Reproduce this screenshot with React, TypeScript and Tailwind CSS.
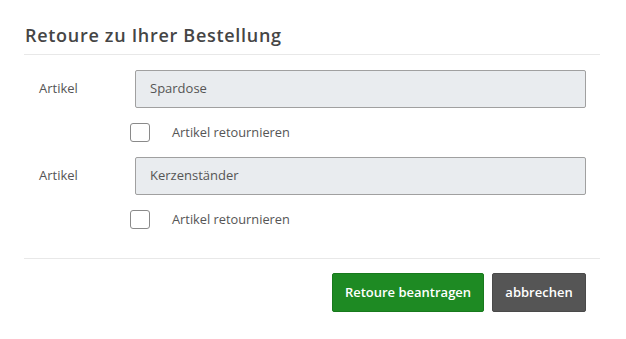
import React from "react";

function Row({ value }: { value: string }) {
  return (
    <div>
      <div className="flex items-center h-[38px]">
        <div className="w-[96px] text-[13px] text-[#555]">Artikel</div>
        <div className="flex-1 h-[38px] flex items-center bg-[#e9ecef] border border-[#a0a0a0] rounded-[2px] pl-[14px] text-[13px] text-[#555]">
          {value}
        </div>
      </div>
      <div className="flex items-center h-[19px] mt-[15px] ml-[91px]">
        <div className="w-[20px] h-[19px] border border-[#8a8a8a] rounded-[3px] bg-white"></div>
        <div className="ml-[22px] text-[12.8px] text-[#555]">Artikel retournieren</div>
      </div>
    </div>
  );
}

export default function App() {
  return (
    <div className="w-[626px] h-[339px] bg-white" style={{ fontFamily: '"Open Sans", sans-serif' }}>
      <div className="pl-[24px] pr-[26px]">
        <div className="h-[55px] flex items-end pb-[10px] border-b border-[#e8e8e8]">
          <h1 className="pl-[1px] text-[18px] font-semibold text-[#454545] tracking-[0.7px] leading-none">
            Retoure zu Ihrer Bestellung
          </h1>
        </div>
        <div className="pl-[15px] pr-[14px] pt-[15px] pb-[29px] border-b border-[#e8e8e8] flex flex-col gap-[15px]">
          <Row value="Spardose" />
          <Row value="Kerzenständer" />
        </div>
        <div className="flex justify-end gap-[8px] pr-[14px] pt-[14px]">
          <button className="h-[39px] w-[152px] bg-[#1e8a23] border border-[#187a1d] rounded-[2px] text-white text-[13px] font-semibold">
            Retoure beantragen
          </button>
          <button className="h-[39px] w-[94px] bg-[#555555] border border-[#4a4a4a] rounded-[2px] text-white text-[13px] font-semibold">
            abbrechen
          </button>
        </div>
      </div>
    </div>
  );
}
